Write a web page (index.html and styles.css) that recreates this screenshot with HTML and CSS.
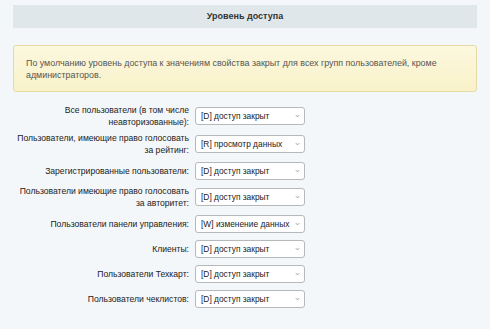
FILE: index.html
```html
<!DOCTYPE html>
<html lang="ru">
<head>
  <meta charset="UTF-8" />
  <meta name="viewport" content="width=device-width, initial-scale=1.0"/>
  <title>Уровень доступа</title>
  <link rel="stylesheet" href="styles.css">
</head>
<body>
  <div class="page">
    <div class="section-title">Уровень доступа</div>

    <div class="notice">
      По умолчанию уровень доступа к значениям свойства закрыт для всех групп пользователей, кроме администраторов.
    </div>

    <div class="rights">
      <div class="row">
        <label>Все пользователи (в том числе неавторизованные):</label>
        <div class="pick"><select><option>[D] доступ закрыт</option></select><svg viewBox="0 0 6 4"><path d="M1 1l2 2 2-2"/></svg></div>
      </div>
      <div class="row">
        <label>Пользователи, имеющие право голосовать за рейтинг:</label>
        <div class="pick"><select><option>[R] просмотр данных</option></select><svg viewBox="0 0 6 4"><path d="M1 1l2 2 2-2"/></svg></div>
      </div>
      <div class="row">
        <label>Зарегистрированные пользователи:</label>
        <div class="pick"><select><option>[D] доступ закрыт</option></select><svg viewBox="0 0 6 4"><path d="M1 1l2 2 2-2"/></svg></div>
      </div>
      <div class="row">
        <label>Пользователи имеющие право голосовать за авторитет:</label>
        <div class="pick"><select><option>[D] доступ закрыт</option></select><svg viewBox="0 0 6 4"><path d="M1 1l2 2 2-2"/></svg></div>
      </div>
      <div class="row">
        <label>Пользователи панели управления:</label>
        <div class="pick"><select><option>[W] изменение данных</option></select><svg viewBox="0 0 6 4"><path d="M1 1l2 2 2-2"/></svg></div>
      </div>
      <div class="row">
        <label>Клиенты:</label>
        <div class="pick"><select><option>[D] доступ закрыт</option></select><svg viewBox="0 0 6 4"><path d="M1 1l2 2 2-2"/></svg></div>
      </div>
      <div class="row">
        <label>Пользователи Техкарт:</label>
        <div class="pick"><select><option>[D] доступ закрыт</option></select><svg viewBox="0 0 6 4"><path d="M1 1l2 2 2-2"/></svg></div>
      </div>
      <div class="row">
        <label>Пользователи чеклистов:</label>
        <div class="pick"><select><option>[D] доступ закрыт</option></select><svg viewBox="0 0 6 4"><path d="M1 1l2 2 2-2"/></svg></div>
      </div>
    </div>
  </div>
</body>
</html>
```
FILE: styles.css
```css
html, body { margin: 0; background: #f4f7f9; }
body { font-family: "Liberation Sans", Arial, sans-serif; font-size: 9px; color: #333; }
.page { padding: 5px 13px 0; }

.section-title {
  height: 23px;
  line-height: 23px;
  background: #e0e7eb;
  text-align: center;
  font-weight: bold;
  color: #333;
}

.notice {
  margin-top: 17px;
  padding: 11px 12px 10px;
  line-height: 12px;
  font-size: 8.9px;
  background: linear-gradient(#fcf8df, #f8f1c8);
  border: 1px solid #e6dba6;
  border-radius: 3px;
  color: #555;
}

.rights { margin-top: 10px; }
.row {
  display: grid;
  grid-template-columns: 176px 110px;
  column-gap: 6px;
  align-items: center;
  min-height: 25px;
  padding: 2px 0;
  box-sizing: border-box;
}
.row label { text-align: right; line-height: 12px; font-size: 8.6px; color: #222; }

.pick { position: relative; height: 18px; }
.pick select {
  appearance: none;
  width: 110px;
  height: 18px;
  padding: 0 10px 0 5px;
  font: 8.4px "Liberation Sans", Arial, sans-serif;
  color: #222;
  background: #fff;
  border: 1px solid #b5b9bc;
  border-radius: 3px;
  box-sizing: border-box;
}
.pick svg {
  position: absolute;
  right: 5px;
  top: 7px;
  width: 5px;
  height: 4px;
  fill: none;
  stroke: #888;
  stroke-width: 1;
}
```
